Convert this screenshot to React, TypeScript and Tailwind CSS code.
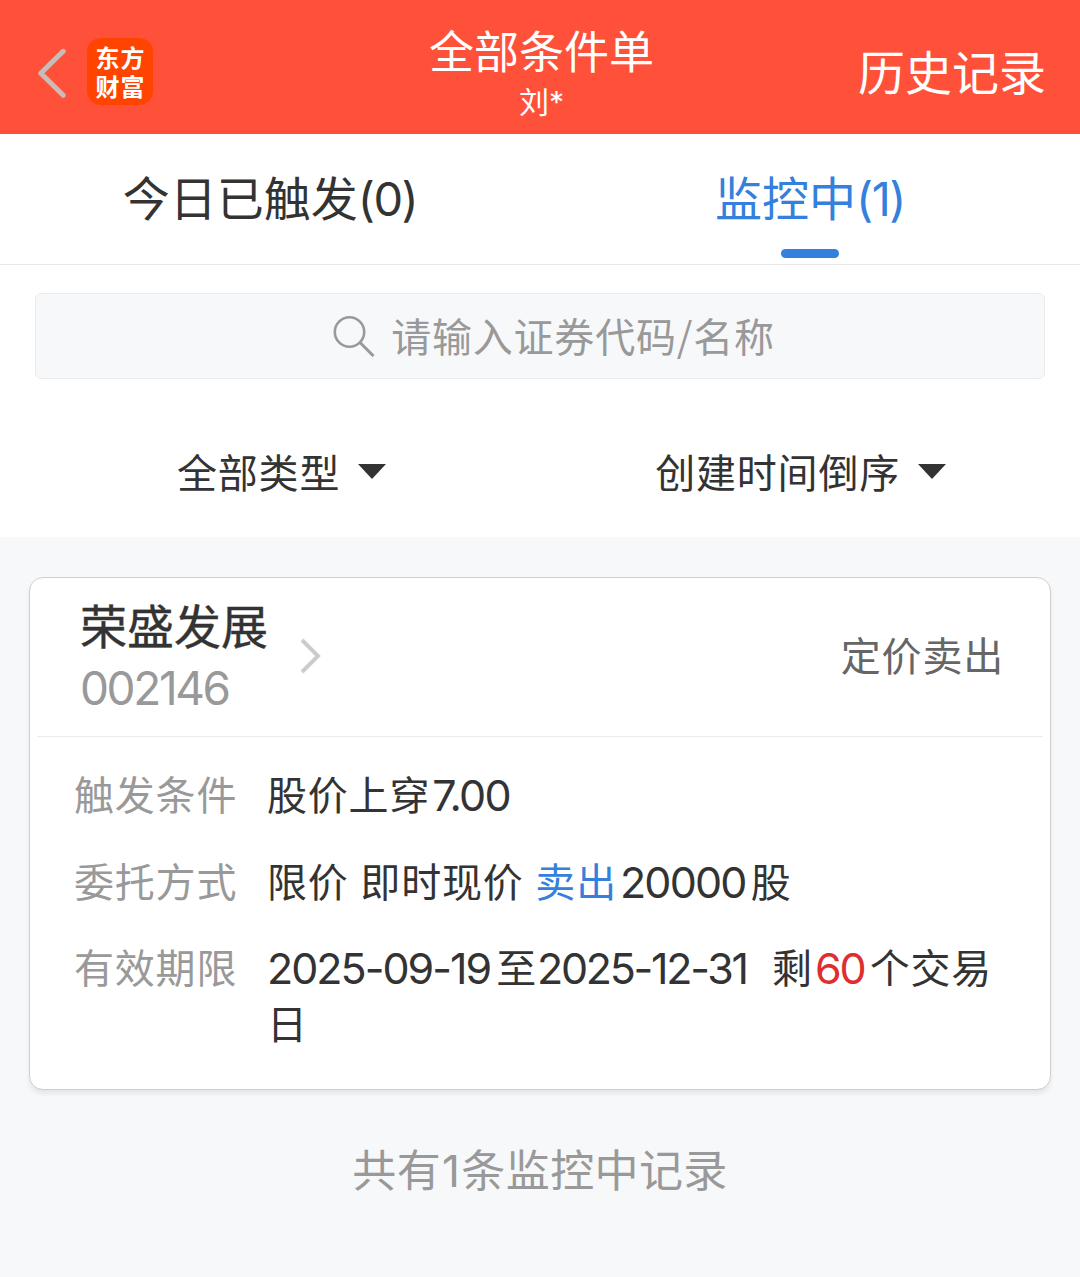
import React from 'react';

const CJK = "font-['Noto_Sans_CJK_SC',sans-serif]";

const tabs = [
  { id: 'today', label: '今日已触发', count: 0 },
  { id: 'watching', label: '监控中', count: 1 },
];

const Num = ({ children, className = '' }) => (
  <span className={`font-['Inter','Noto_Sans_CJK_SC',sans-serif] leading-[0] ${className}`}>
    {children}
  </span>
);

const Header = () => (
  <header className="grid h-[134px] grid-cols-3 bg-[#ff513a] text-white">
    <div className="flex items-center pt-[9px] pl-[36px]">
      <svg className="h-[52px] w-[32px]" viewBox="0 0 32 52" fill="none">
        <path
          d="M27.2 5.3 4.8 27.3 27.2 49.3"
          stroke="#c8bcb8"
          strokeWidth="5"
          strokeLinecap="round"
          strokeLinejoin="round"
        />
      </svg>
      <div className="ml-[19px] flex h-[67px] w-[66px] items-center justify-center rounded-[14px] bg-[#ff4400] pb-[2px] pl-px text-[24px] leading-[29px] font-bold tracking-[1px]">
        <span>
          东方
          <br />
          财富
        </span>
      </div>
    </div>
    <div className="flex flex-col items-center pt-[22px]">
      <h1 className="pl-[3px] text-[45px] leading-[56px]">全部条件单</h1>
      <p className="pl-[3px] text-[30px] leading-[44px]">
        刘<Num className="text-[30px]">*</Num>
      </p>
    </div>
    <div className="flex items-center justify-end pt-[7px] pr-[34px] text-[47px]">
      历史记录
    </div>
  </header>
);

const Tabs = ({ active }) => (
  <nav className="grid h-[131px] grid-cols-2 border-b border-[#e8e8e8] bg-white">
    {tabs.map((tab) => (
      <div
        key={tab.id}
        className={`relative flex justify-center pt-[28px] text-[47px] leading-[68px] ${
          tab.id === active ? 'text-[#3480dc]' : 'text-[#333333]'
        }`}
      >
        <span>
          {tab.label}
          <Num className="text-[47px] tracking-[-1.5px]">({tab.count})</Num>
        </span>
        {tab.id === active && (
          <span className="absolute bottom-[6px] left-1/2 h-[9px] w-[58px] -translate-x-1/2 rounded-full bg-[#3480dc]" />
        )}
      </div>
    ))}
  </nav>
);

const SearchBox = () => (
  <div className="mx-[35px] mt-[28px] flex h-[86px] items-center justify-center rounded-md border border-[#ebecee] bg-[#f7f8fa] pl-[28px] text-[40px] tracking-[0.8px] text-[#999999]">
    <svg className="mr-[16px] h-[41px] w-[42px]" viewBox="0 0 42 41" fill="none">
      <circle cx="16.5" cy="16" r="14.7" stroke="#999999" strokeWidth="2.6" />
      <path d="M27 26.5 40.5 40" stroke="#999999" strokeWidth="3" />
    </svg>
    <span className="pb-[2px]">请输入证券代码/名称</span>
  </div>
);

const FilterButton = ({ children }) => (
  <div className="flex items-center text-[40px] leading-[60px] tracking-[0.8px] text-[#333333]">
    <span className="pb-[4px]">{children}</span>
    <svg className="mb-[3px] ml-[18px] h-[15px] w-[28px]" viewBox="0 0 28 15">
      <path d="M0 0h28L14 15z" fill="#333333" />
    </svg>
  </div>
);

const DetailRow = ({ label, children }) => (
  <div className="flex leading-[56px]">
    <dt className="w-[193px] shrink-0 text-[#999999]">{label}</dt>
    <dd className="whitespace-nowrap text-[#333333] [word-spacing:2px]">{children}</dd>
  </div>
);

const Amount = ({ children, className = 'tracking-[-1.7px]' }) => (
  <Num className={`align-[-1px] text-[43px] ${className}`}>{children}</Num>
);

const OrderCard = () => (
  <section className="mx-[29px] mt-[40px] h-[513px] rounded-[14px] border border-[#cfcfcf] bg-white shadow-[0_4px_4px_rgba(0,0,0,0.07)]">
    <div className="mx-[7px] flex h-[159px] items-center justify-between border-b border-[#ebebeb] pr-[39px] pl-[43px]">
      <div className="flex items-center">
        <div className="pb-[6px]">
          <h2 className="text-[47px] leading-[62px] text-[#333333] [-webkit-text-stroke:0.4px_#333333]">
            荣盛发展
          </h2>
          <p className="text-[46px] leading-[60px] text-[#999999]">
            <Num className="tracking-[-2.4px]">002146</Num>
          </p>
        </div>
        <svg className="mb-[2px] ml-[32px] h-[36px] w-[21px]" viewBox="0 0 21 36" fill="none">
          <path d="M2 2l16 16L2 34" stroke="#cccccc" strokeWidth="4" />
        </svg>
      </div>
      <span className="pb-[6px] text-[40px] tracking-[0.8px] text-[#666666]">定价卖出</span>
    </div>
    <dl className="flex flex-col gap-[30.5px] pt-[28px] pl-[44px] text-[40px] tracking-[0.8px]">
      <DetailRow label="触发条件">
        股价上穿<Amount className="ml-[2px] tracking-[-1.7px]">7.00</Amount>
      </DetailRow>
      <DetailRow label="委托方式">
        限价 即时现价 <span className="text-[#3480dc]">卖出</span>
        <Amount className="mr-[5px] ml-[3px] tracking-[-1.8px]">20000</Amount>股
      </DetailRow>
      <DetailRow label="有效期限">
        <Amount className="mr-[6px] tracking-[-2px]">2025-09-19</Amount>至
        <Amount className="mr-[2px] tracking-[-2.3px]">2025-12-31</Amount>
        &nbsp; 剩<Amount className="mr-[5px] ml-[2px] tracking-[-2px] text-[#e02e2e]">60</Amount>个交易
        <br />日
      </DetailRow>
    </dl>
  </section>
);

export default function App() {
  return (
    <div className={`min-h-screen w-full bg-[#f7f8fa] ${CJK}`}>
      <Header />
      <div className="h-[403px] bg-white">
        <Tabs active="watching" />
        <SearchBox />
        <div className="mt-[62px] flex justify-between pr-[134px] pl-[177px]">
          <FilterButton>全部类型</FilterButton>
          <FilterButton>创建时间倒序</FilterButton>
        </div>
      </div>
      <OrderCard />
      <p className="mt-[48px] text-center text-[44px] leading-[60px] tracking-[0.4px] text-[#999999]">
        共有<Num className="mx-[1px]">1</Num>条监控中记录
      </p>
    </div>
  );
}
